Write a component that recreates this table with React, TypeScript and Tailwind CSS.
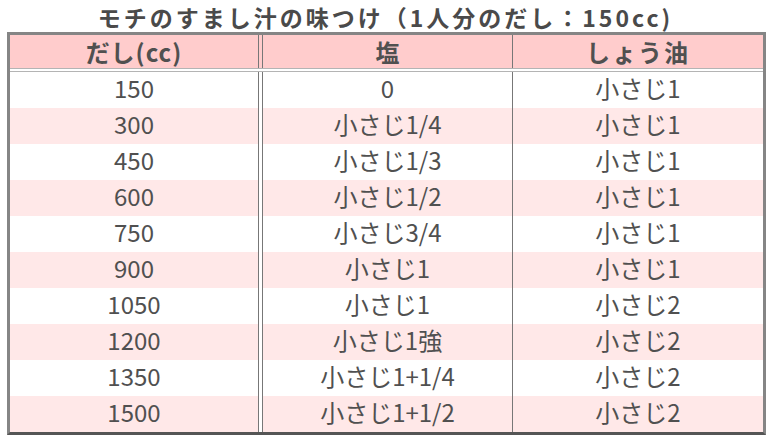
const rows: [string, string, string][] = [
  ['150', '0', '小さじ1'],
  ['300', '小さじ1/4', '小さじ1'],
  ['450', '小さじ1/3', '小さじ1'],
  ['600', '小さじ1/2', '小さじ1'],
  ['750', '小さじ3/4', '小さじ1'],
  ['900', '小さじ1', '小さじ1'],
  ['1050', '小さじ1', '小さじ2'],
  ['1200', '小さじ1強', '小さじ2'],
  ['1350', '小さじ1+1/4', '小さじ2'],
  ['1500', '小さじ1+1/2', '小さじ2'],
];

const font = { fontFamily: '"Noto Sans CJK JP", "Noto Sans", sans-serif' };

export default function App() {
  return (
    <div className="w-[771px] h-[440px] bg-white text-[#505050]" style={font}>
      <div className="h-[32px] pt-[1px] flex items-center justify-center text-[23px] font-bold text-[#4a4a4a] tracking-[3px] leading-[30px] whitespace-nowrap">
        モチのすまし汁の味つけ（1人分のだし：150cc)
      </div>

      <div className="ml-[7px] w-[759px] border-[3px] border-[#858585] border-b-[#555] bg-white">
        {/* header */}
        <div className="flex h-[33px] bg-[#ffcccc] text-[24px] font-bold leading-[30px]">
          <div className="w-[249px] border-r border-[#777] flex items-center justify-center tracking-[1px]">
            だし(cc)
          </div>
          <div className="w-[3px]" />
          <div className="w-[251px] border-l border-r border-[#777] flex items-center justify-center">
            塩
          </div>
          <div className="flex-1 flex items-center justify-center tracking-[2px]">しょう油</div>
        </div>
        <div className="h-[4px] border-t border-b border-[#b4b4b4] bg-white" />

        {rows.map((r, i) => {
          const bg = i % 2 === 0 ? 'bg-white' : 'bg-[#ffe8e8]';
          return (
            <div key={r[0]} className="flex h-[36px] text-[24px] leading-[30px]">
              <div className={`w-[249px] border-r border-[#777] flex items-center justify-center pb-[5px] ${bg}`}>
                {r[0]}
              </div>
              <div className="w-[3px] bg-white" />
              <div className={`w-[251px] border-l border-r border-[#777] flex items-center justify-center pb-[5px] ${bg}`}>
                {r[1]}
              </div>
              <div className={`flex-1 flex items-center justify-center pb-[5px] ${bg}`}>{r[2]}</div>
            </div>
          );
        })}
      </div>
    </div>
  );
}
